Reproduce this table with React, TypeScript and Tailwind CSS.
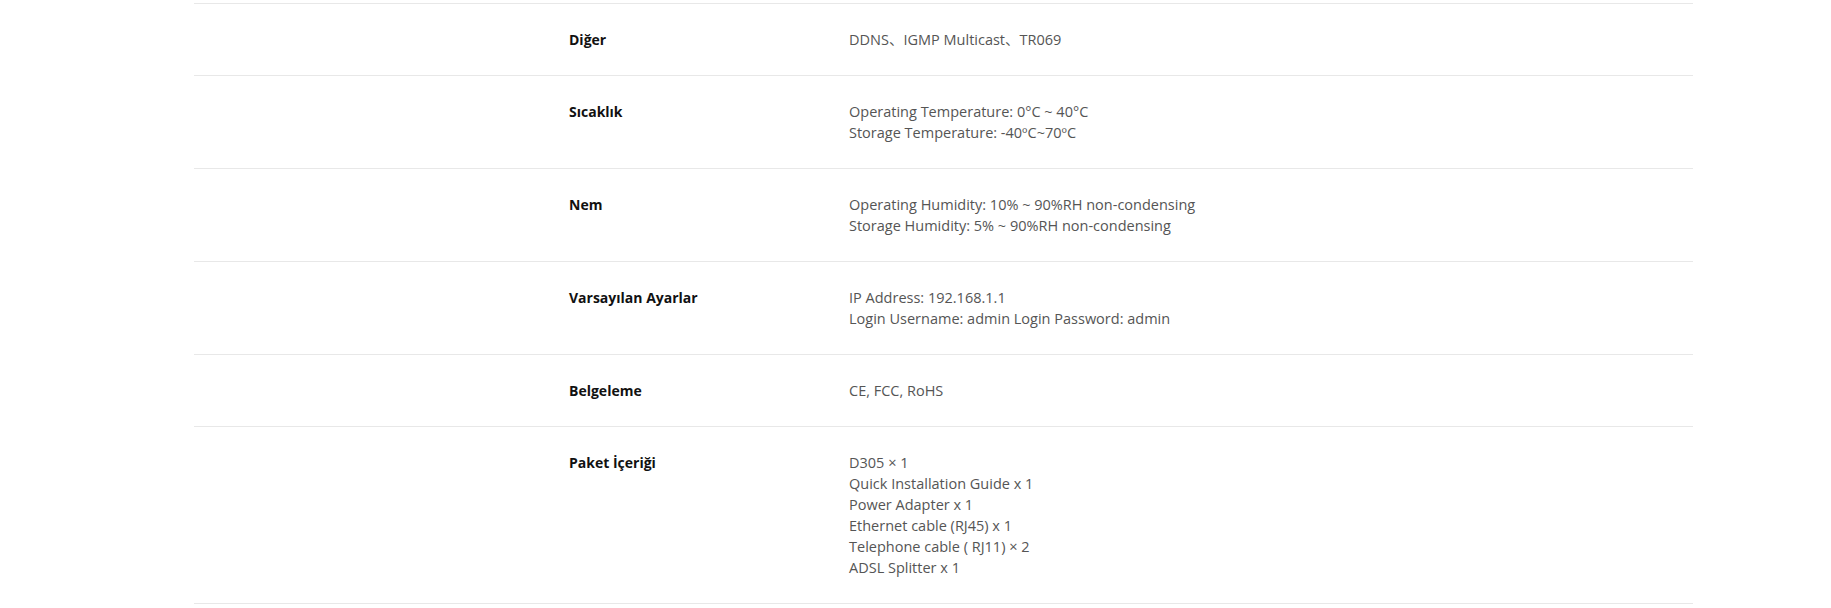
import React from "react";

const rows: { label: string; values: string[] }[] = [
  { label: "Diğer", values: ["DDNS、IGMP Multicast、TR069"] },
  {
    label: "Sıcaklık",
    values: ["Operating Temperature: 0°C ~ 40°C", "Storage Temperature: -40ºC~70ºC"],
  },
  {
    label: "Nem",
    values: [
      "Operating Humidity: 10% ~ 90%RH non-condensing",
      "Storage Humidity: 5% ~ 90%RH non-condensing",
    ],
  },
  {
    label: "Varsayılan Ayarlar",
    values: ["IP Address: 192.168.1.1", "Login Username: admin Login Password: admin"],
  },
  { label: "Belgeleme", values: ["CE, FCC, RoHS"] },
  {
    label: "Paket İçeriği",
    values: [
      "D305 × 1",
      "Quick Installation Guide x 1",
      "Power Adapter x 1",
      "Ethernet cable (RJ45) x 1",
      "Telephone cable ( RJ11) × 2",
      "ADSL Splitter x 1",
    ],
  },
];

export default function App() {
  return (
    <div
      className="min-h-[608px] bg-white pt-[3px]"
      style={{ fontFamily: '"Open Sans", "Noto Sans CJK SC", sans-serif' }}
    >
      <div className="ml-[194px] w-[1499px] border-b border-[#e8e8e8]">
        {rows.map((r) => (
          <div key={r.label} className="flex border-t border-[#e8e8e8] pt-[25px] pb-[25px] pl-[375px]">
            <div className="w-[280px] text-[14px] leading-[21px] font-bold text-[#111]">{r.label}</div>
            <div className="text-[14.5px] leading-[21px] text-[#555]">
              {r.values.map((v) => (
                <div key={v}>{v}</div>
              ))}
            </div>
          </div>
        ))}
      </div>
    </div>
  );
}
